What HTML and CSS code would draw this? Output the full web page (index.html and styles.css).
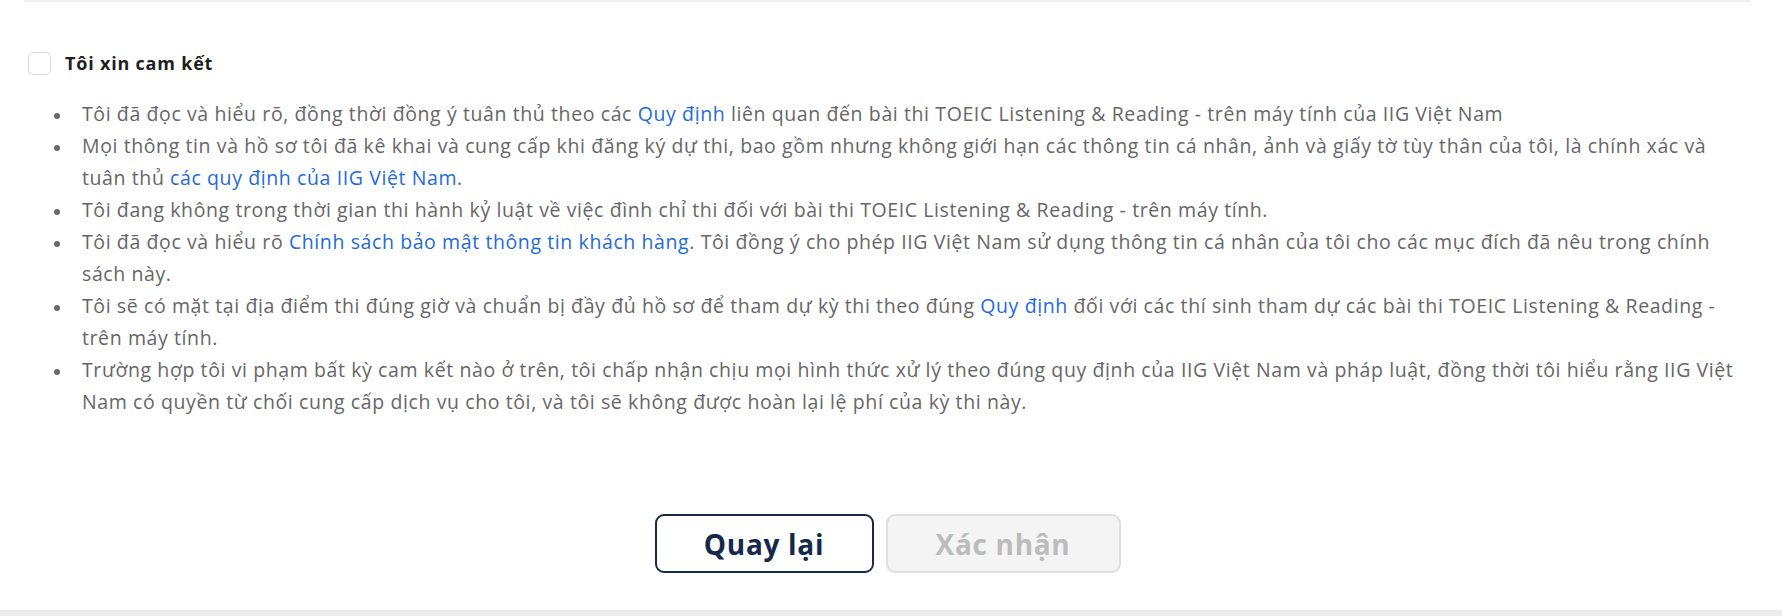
FILE: index.html
```html
<!DOCTYPE html>
<html lang="vi">
<head>
<meta charset="utf-8">
<title>Tôi xin cam kết</title>
<link rel="stylesheet" href="styles.css">
</head>
<body>
<div class="page">
  <section class="card">
    <label class="agree">
      <span class="box"></span>
      <span class="agree-text">Tôi xin cam kết</span>
    </label>
    <ul class="terms">
      <li>Tôi đã đọc và hiểu rõ, đồng thời đồng ý tuân thủ theo các <a href="#">Quy định</a> liên quan đến bài thi TOEIC Listening &amp; Reading - trên máy tính của IIG Việt Nam</li>
      <li>Mọi thông tin và hồ sơ tôi đã kê khai và cung cấp khi đăng ký dự thi, bao gồm nhưng không giới hạn các thông tin cá nhân, ảnh và giấy tờ tùy thân của tôi, là chính xác và tuân thủ <a href="#">các quy định của IIG Việt Nam</a>.</li>
      <li>Tôi đang không trong thời gian thi hành kỷ luật về việc đình chỉ thi đối với bài thi TOEIC Listening &amp; Reading - trên máy tính.</li>
      <li>Tôi đã đọc và hiểu rõ <a href="#">Chính sách bảo mật thông tin khách hàng</a>. Tôi đồng ý cho phép IIG Việt Nam sử dụng thông tin cá nhân của tôi cho các mục đích đã nêu trong chính sách này.</li>
      <li>Tôi sẽ có mặt tại địa điểm thi đúng giờ và chuẩn bị đầy đủ hồ sơ để tham dự kỳ thi theo đúng <a href="#">Quy định</a> đối với các thí sinh tham dự các bài thi TOEIC Listening &amp; Reading - trên máy tính.</li>
      <li>Trường hợp tôi vi phạm bất kỳ cam kết nào ở trên, tôi chấp nhận chịu mọi hình thức xử lý theo đúng quy định của IIG Việt Nam và pháp luật, đồng thời tôi hiểu rằng IIG Việt Nam có quyền từ chối cung cấp dịch vụ cho tôi, và tôi sẽ không được hoàn lại lệ phí của kỳ thi này.</li>
    </ul>
    <div class="actions">
      <button class="btn btn-back" type="button">Quay lại</button>
      <button class="btn btn-confirm" type="button" disabled>Xác nhận</button>
    </div>
  </section>
  <div class="band"></div>
</div>
</body>
</html>
```
FILE: styles.css
```css
html, body {
  margin: 0;
  padding: 0;
  background: #ffffff;
}

body {
  font-family: "Open Sans", "Noto Sans", "Liberation Sans", sans-serif;
  color: #666666;
}

.page {
  display: flex;
  flex-direction: column;
  height: 616px;
}

.card {
  flex: 1;
  margin: 0 31px 0 24px;
  border-top: 2px solid #f0f0f0;
  display: flex;
  flex-direction: column;
}

.agree {
  display: flex;
  align-items: center;
  gap: 14px;
  margin: 49px 0 0 4px;
  cursor: pointer;
}

.box {
  width: 21px;
  height: 21px;
  border: 1.5px solid #dadada;
  border-radius: 5px;
  background: #fff;
}

.agree-text {
  font-size: 18px;
  letter-spacing: 0.8px;
  font-weight: 700;
  color: #1f1f1f;
}

.terms {
  list-style: none;
  margin: 23px 0 0 0;
  padding: 0 0 0 58px;
  font-size: 19.5px;
  letter-spacing: 0.6px;
  line-height: 32px;
  color: #666666;
}

.terms li::before {
  content: "";
  display: inline-block;
  width: 6px;
  height: 6px;
  border-radius: 50%;
  background: #6a6a6a;
  margin-left: -28px;
  margin-right: 22px;
  vertical-align: middle;
}

.terms a {
  color: #1f6bd8;
  text-decoration: none;
}

.actions {
  display: flex;
  justify-content: center;
  gap: 12px;
  margin-top: auto;
  margin-bottom: 37px;
}

.btn {
  height: 59px;
  border-radius: 9px;
  font-family: "Open Sans", sans-serif;
  font-size: 28px;
  letter-spacing: 0.7px;
  font-weight: 700;
  box-sizing: border-box;
  padding: 0;
}

.btn-back {
  width: 219px;
  background: #ffffff;
  border: 2px solid #15294d;
  color: #15294d;
}

.btn-confirm {
  width: 235px;
  background: #f4f4f4;
  border: 2px solid #dedede;
  color: #bcbcbc;
}

.band {
  height: 6px;
  background: #ebebeb;
}
```
